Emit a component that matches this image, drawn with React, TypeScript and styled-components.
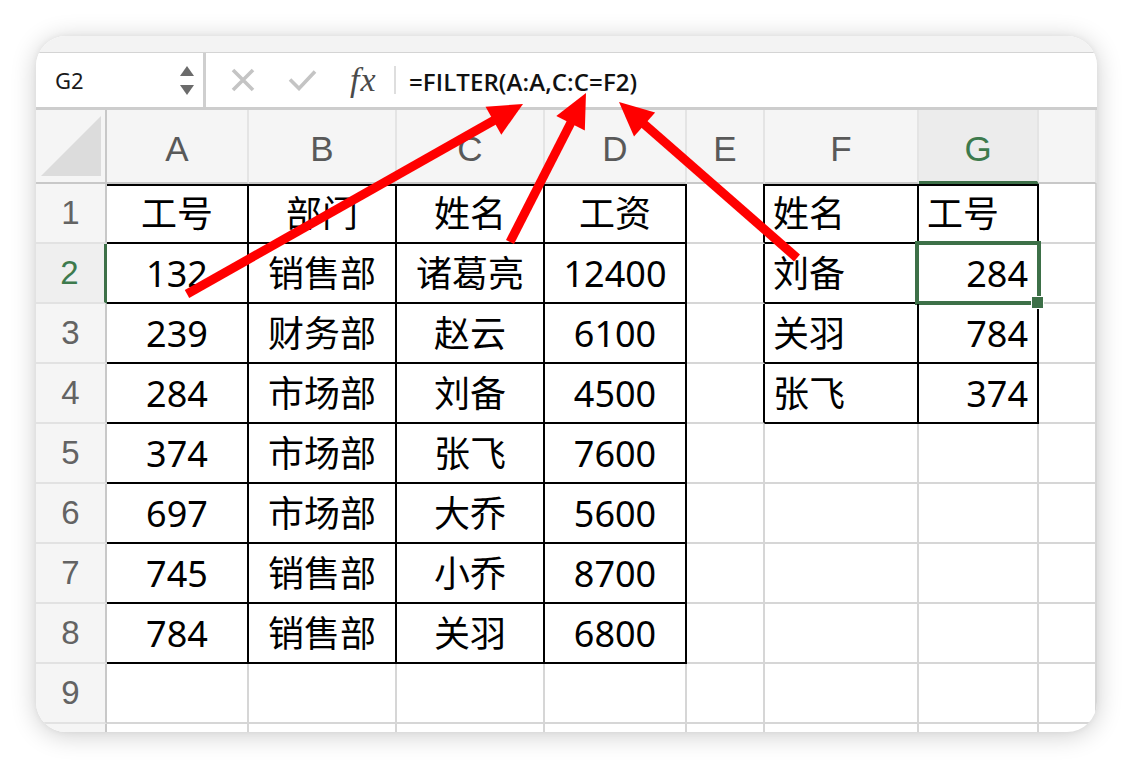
import React from "react";
import styled, { createGlobalStyle, css } from "styled-components";

const Global = createGlobalStyle`
  html, body { margin: 0; padding: 0; background: #ffffff; }
  body { width: 1134px; height: 768px; overflow: hidden; font-family: "Noto Sans", "Noto Sans CJK SC", sans-serif; }
  * { box-sizing: border-box; }
`;

const Page = styled.div`
  position: relative;
  width: 1134px;
  height: 768px;
  padding: 36px 0 0 36px;
`;

const Card = styled.div`
  width: 1061px;
  height: 696px;
  border-radius: 30px;
  overflow: hidden;
  background: #ffffff;
  box-shadow: 0 3px 26px rgba(0, 0, 0, 0.2), 0 0 6px rgba(0, 0, 0, 0.05);
  display: flex;
  flex-direction: column;
`;

const TopStrip = styled.div`
  height: 17px;
  flex: none;
  background: #f3f3f3;
  border-bottom: 1px solid #d4d4d4;
`;

const FormulaBar = styled.div`
  height: 57px;
  flex: none;
  display: flex;
  align-items: stretch;
  background: #ffffff;
  border-bottom: 3px solid #cdcdcd;
`;

const NameBox = styled.div`
  width: 170px;
  flex: none;
  display: flex;
  align-items: center;
  justify-content: space-between;
  padding: 0 9px 0 19px;
  border-right: 3px solid #cfcfcf;
  font-family: "Noto Sans", sans-serif;
  font-size: 22px;
  color: #1a1a1a;
`;

const Spinner = styled.div`
  display: flex;
  flex-direction: column;
  gap: 9px;
`;

const Tools = styled.div`
  display: flex;
  align-items: center;
  padding-left: 25px;
`;

const ToolSlot = styled.div<{ $w: number }>`
  width: ${(p) => p.$w}px;
  display: flex;
  align-items: center;
`;

const Fx = styled.span`
  font-family: "Liberation Serif", "DejaVu Serif", serif;
  font-style: italic;
  font-size: 34px;
  color: #4a4a4a;
  letter-spacing: 1px;
  margin-left: 2px;
`;

const Divider = styled.div`
  width: 2px;
  height: 28px;
  background: #dedede;
  margin: 0 13px 0 12px;
`;

const FormulaText = styled.div`
  display: flex;
  align-items: center;
  padding-top: 2px;
  font-family: "Open Sans", "Noto Sans", sans-serif;
  font-weight: 600;
  font-size: 24px;
  color: #111;
  letter-spacing: 0.1px;
`;

const Sheet = styled.div`
  flex: 1;
  display: grid;
  grid-template-columns: 71px 142px 148px 148px 142px 78px 154px 120px 1fr;
  grid-template-rows: 74px repeat(10, 60px);
`;

const Corner = styled.div`
  background: #f5f5f5;
  border-right: 2px solid #c8c8c8;
  border-bottom: 2px solid #c8c8c8;
  display: flex;
  align-items: center;
  justify-content: center;
`;

const ColHead = styled.div<{ $active?: boolean }>`
  background: ${(p) => (p.$active ? "#ececec" : "#f5f5f5")};
  border-right: 2px solid #e4e4e4;
  border-bottom: ${(p) => (p.$active ? "3px solid #3d7048" : "2px solid #c8c8c8")};
  display: flex;
  align-items: center;
  justify-content: center;
  font-family: "Liberation Sans", Arial, sans-serif;
  font-size: 35px;
  color: ${(p) => (p.$active ? "#3d7a4d" : "#595959")};
  padding-top: 6px;
`;

const RowHead = styled.div<{ $active?: boolean }>`
  background: ${(p) => (p.$active ? "#efefef" : "#f5f5f5")};
  border-right: ${(p) => (p.$active ? "3px solid #3d7048" : "2px solid #c8c8c8")};
  border-bottom: 2px solid #e2e2e2;
  display: flex;
  align-items: center;
  justify-content: center;
  font-family: "Liberation Sans", Arial, sans-serif;
  font-size: 33px;
  color: ${(p) => (p.$active ? "#3d7a4d" : "#636363")};
  padding-right: ${(p) => (p.$active ? "1px" : "0")};
`;

type Align = "left" | "center" | "right";

const Cell = styled.div<{
  $align: Align;
  $rightBlack: boolean;
  $bottomBlack: boolean;
  $topBlack: boolean;
  $selected: boolean;
}>`
  position: relative;
  display: flex;
  align-items: center;
  justify-content: ${(p) =>
    p.$align === "left" ? "flex-start" : p.$align === "right" ? "flex-end" : "center"};
  padding: 2px ${(p) => (p.$align === "right" ? "9px" : "0")} 0
    ${(p) => (p.$align === "left" ? "8px" : "0")};
  border-right: 2px solid ${(p) => (p.$rightBlack ? "#000" : "#d6d6d6")};
  border-bottom: 2px solid ${(p) => (p.$bottomBlack ? "#000" : "#d6d6d6")};
  box-shadow: ${(p) => (p.$topBlack ? "inset 0 2px 0 #000" : "none")};
  font-family: "Noto Sans", "Noto Sans CJK SC", sans-serif;
  font-size: 36px;
  color: #000;
  line-height: 1;
  white-space: nowrap;
  ${(p) =>
    p.$selected &&
    css`
      &::after {
        content: "";
        position: absolute;
        left: -4px;
        top: -3px;
        right: -4px;
        bottom: -3px;
        border: 4px solid #3d7048;
        pointer-events: none;
      }
      &::before {
        content: "";
        position: absolute;
        right: -7px;
        bottom: -7px;
        width: 11px;
        height: 11px;
        background: #3d7048;
        border: 1px solid #ffffff;
        z-index: 2;
      }
    `}
`;

const Overlay = styled.svg`
  position: absolute;
  left: 0;
  top: 0;
  pointer-events: none;
`;

const COLS = ["A", "B", "C", "D", "E", "F", "G", "H"];

const DATA: string[][] = [
  ["工号", "部门", "姓名", "工资", "", "姓名", "工号", ""],
  ["132", "销售部", "诸葛亮", "12400", "", "刘备", "284", ""],
  ["239", "财务部", "赵云", "6100", "", "关羽", "784", ""],
  ["284", "市场部", "刘备", "4500", "", "张飞", "374", ""],
  ["374", "市场部", "张飞", "7600", "", "", "", ""],
  ["697", "市场部", "大乔", "5600", "", "", "", ""],
  ["745", "销售部", "小乔", "8700", "", "", "", ""],
  ["784", "销售部", "关羽", "6800", "", "", "", ""],
  ["", "", "", "", "", "", "", ""],
  ["", "", "", "", "", "", "", ""],
];

const inTable = (r: number, c: number) =>
  (c >= 0 && c <= 3 && r >= 0 && r <= 7) || (c >= 5 && c <= 6 && r >= 0 && r <= 3);

const alignFor = (r: number, c: number): Align => {
  if (c <= 3) return "center";
  if (c === 5) return "left";
  if (c === 6) return r === 0 ? "left" : "right";
  return "center";
};

type Pt = [number, number];

function Arrow({ from, to }: { from: Pt; to: Pt }) {
  const dx = to[0] - from[0];
  const dy = to[1] - from[1];
  const len = Math.hypot(dx, dy);
  const ux = dx / len;
  const uy = dy / len;
  const headLen = 34;
  const half = 16;
  const bx = to[0] - ux * headLen;
  const by = to[1] - uy * headLen;
  const nx = -uy;
  const ny = ux;
  const pts = `${to[0]},${to[1]} ${bx + nx * half},${by + ny * half} ${bx - nx * half},${by - ny * half}`;
  return (
    <g>
      <line
        x1={from[0]}
        y1={from[1]}
        x2={bx + ux * 4}
        y2={by + uy * 4}
        stroke="#ff0000"
        strokeWidth={9}
        strokeLinecap="butt"
      />
      <polygon points={pts} fill="#ff0000" />
    </g>
  );
}

export default function App() {
  return (
    <Page>
      <Global />
      <Card>
        <TopStrip />
        <FormulaBar>
          <NameBox>
            <span>G2</span>
            <Spinner>
              <svg width="14" height="10" viewBox="0 0 14 10">
                <polygon points="7,0 14,10 0,10" fill="#6b6b6b" />
              </svg>
              <svg width="14" height="10" viewBox="0 0 14 10">
                <polygon points="0,0 14,0 7,10" fill="#6b6b6b" />
              </svg>
            </Spinner>
          </NameBox>
          <Tools>
            <ToolSlot $w={57}>
              <svg width="24" height="24" viewBox="0 0 24 24">
                <path d="M2 2 L22 22 M22 2 L2 22" stroke="#c4c4c4" strokeWidth="3.6" />
              </svg>
            </ToolSlot>
            <ToolSlot $w={60}>
              <svg width="29" height="22" viewBox="0 0 29 22">
                <path d="M2 10.5 L11 19.5 L27 2.5" stroke="#c4c4c4" strokeWidth="3.6" fill="none" />
              </svg>
            </ToolSlot>
            <ToolSlot $w={34}>
              <Fx>fx</Fx>
            </ToolSlot>
            <Divider />
          </Tools>
          <FormulaText>=FILTER(A:A,C:C=F2)</FormulaText>
        </FormulaBar>
        <Sheet>
          <Corner>
            <svg width="60" height="60" viewBox="0 0 60 60">
              <polygon points="60,0 60,60 0,60" fill="#dcdcdc" />
            </svg>
          </Corner>
          {COLS.map((c) => (
            <ColHead key={c} $active={c === "G"}>
              {c === "H" ? "" : c}
            </ColHead>
          ))}
          {DATA.map((row, r) => (
            <React.Fragment key={r}>
              <RowHead $active={r === 1}>{r < 9 ? r + 1 : ""}</RowHead>
              {row.map((v, c) => (
                <Cell
                  key={c}
                  $align={alignFor(r, c)}
                  $rightBlack={inTable(r, c) || inTable(r, c + 1)}
                  $bottomBlack={inTable(r, c) || inTable(r + 1, c)}
                  $topBlack={r === 0 && inTable(r, c)}
                  $selected={r === 1 && c === 6}
                >
                  {v}
                </Cell>
              ))}
            </React.Fragment>
          ))}
        </Sheet>
      </Card>
      <Overlay width="1134" height="768" viewBox="0 0 1134 768">
        <Arrow from={[187, 294]} to={[523, 104]} />
        <Arrow from={[510, 242]} to={[586, 93]} />
        <Arrow from={[797, 258]} to={[619, 102]} />
      </Overlay>
    </Page>
  );
}
